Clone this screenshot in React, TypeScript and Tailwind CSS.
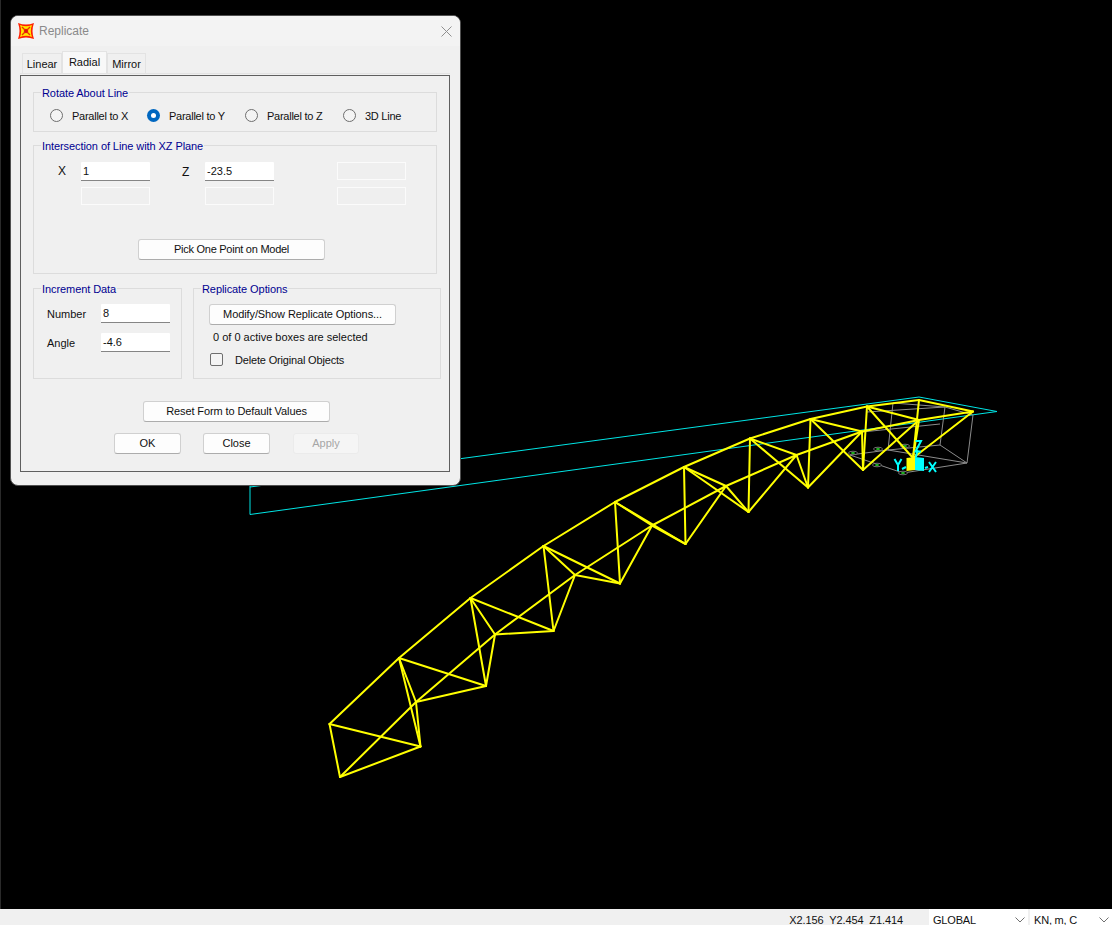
const F = "font-['Liberation_Sans',Arial,sans-serif]";

// top chord, middle chord and bottom nodes of the truss
const A = [[329.5, 724], [399, 658], [470.5, 598], [543.5, 546], [615, 502], [684, 467], [750, 438.5], [810.5, 419], [867, 406.5], [919, 400]];
const B = [[340, 777], [416, 702], [495, 634.5], [575, 575], [652, 525.5], [726, 486], [796.5, 455], [862, 431.5], [919, 420]];
const C = [[420.5, 746.5], [486, 686], [553.5, 631], [620, 583.5], [685.5, 544], [748.5, 512], [808, 487.5], [863, 470], [913, 458]];
const END = [973, 411.5];

function trussLines() {
  const out: number[][][] = [];
  for (let i = 0; i < 9; i++) {
    out.push([A[i], A[i + 1]], [A[i], C[i]], [B[i], C[i]], [A[i + 1], C[i]]);
    if (i < 8) out.push([B[i], B[i + 1]], [B[i + 1], C[i]], [A[i + 1], B[i + 1]]);
  }
  out.push([A[0], B[0]], [A[9], END], [B[8], END], [C[8], END]);
  return out;
}

const GREY_BOX = [
  [[893, 403], [945, 407]], [[945, 407], [973, 415]], [[893, 403], [888, 450]], [[945, 407], [940, 445]],
  [[973, 415], [967, 463]], [[888, 450], [967, 463]], [[850, 455], [888, 450]], [[888, 450], [940, 445]],
  [[940, 445], [967, 463]], [[850, 455], [903, 473]], [[903, 473], [967, 463]], [[867, 412], [945, 407]],
  [[862, 432], [940, 424]],
];

const ELLIPSES = [[853, 453], [878, 449], [877, 465], [903, 473], [905, 446]];

function Model() {
  return (
    <svg className="absolute inset-0" width="1112" height="909" viewBox="0 0 1112 909" fill="none">
      <polyline points="250,485 250,514.5 997,411.5 919,397 250,487" stroke="#00e5e5" strokeWidth="1" />
      {GREY_BOX.map((l, i) => (
        <line key={i} x1={l[0][0]} y1={l[0][1]} x2={l[1][0]} y2={l[1][1]} stroke="#8c8c8c" strokeWidth="1" />
      ))}
      {ELLIPSES.map(([x, y], i) => (
        <g key={i}>
          <ellipse cx={x} cy={y} rx="4.5" ry="1.8" stroke="#8c8c8c" strokeWidth="0.8" fill="#000" />
          <ellipse cx={x} cy={y} rx="2" ry="0.9" fill="#22c022" />
        </g>
      ))}
      {trussLines().map((l, i) => (
        <line key={i} x1={l[0][0]} y1={l[0][1]} x2={l[1][0]} y2={l[1][1]} stroke="#ffff00" strokeWidth="2" strokeLinecap="round" />
      ))}
      {/* global axes */}
      <path d="M906.5 458 L915 457 V470 L906.5 471 Z" fill="#ffff00" />
      <path d="M915 457 L924 458 V471 L915 470 Z" fill="#00ffff" />
      <path d="M916 457 L917.5 450 M915.5 441 H921 L915.5 451.5 H921" stroke="#00ffff" strokeWidth="2" />
      <path d="M894.5 459 L898 465 L901.5 459 M898 465 V471 M902 469 L906 467" stroke="#00ffff" strokeWidth="2" />
      <path d="M929 462 L936 472 M936 462 L929 472 M925 468 L928 467" stroke="#00ffff" strokeWidth="2" />
    </svg>
  );
}

function Logo() {
  return (
    <svg width="16" height="16" viewBox="0 0 16 16" className="shrink-0">
      <path d="M0 0 Q8 3 16 0 Q13 8 16 16 Q8 13 0 16 Q3 8 0 0 Z" fill="#ff2000" />
      <path d="M2 2 Q8 4.4 14 2 Q11.6 8 14 14 Q8 11.6 2 14 Q4.4 8 2 2 Z" fill="#ffe800" />
      <path d="M4 4 L12 12 M12 4 L4 12" stroke="#f03000" strokeWidth="1.4" />
      <path d="M8 5.5 L10.5 8 L8 10.5 L5.5 8 Z" fill="#e01010" />
    </svg>
  );
}

function Radio({ label, checked, className }: { label: string; checked?: boolean; className: string }) {
  return (
    <div className={`flex items-center ${className}`}>
      {checked ? (
        <span className="w-[13px] h-[13px] rounded-full bg-[#0067c0] flex items-center justify-center">
          <span className="w-[5px] h-[5px] rounded-full bg-white" />
        </span>
      ) : (
        <span className="w-[13px] h-[13px] rounded-full border border-[#6e6e6e] bg-[#f4f4f4]" />
      )}
      <span className="ml-[9px] text-[#101010] tracking-[-0.25px]">{label}</span>
    </div>
  );
}

function Field({ value, className = '' }: { value: string; className?: string }) {
  return (
    <div className={`w-[69px] h-[19px] bg-white border-b border-[#858585] rounded-t-[1px] pl-[2px] leading-[19px] text-[#101010] ${className}`}>
      {value}
    </div>
  );
}

function EmptyField({ className = '' }: { className?: string }) {
  return <div className={`w-[69px] h-[18px] bg-[#efefef] border border-[#fbfbfb] ${className}`} />;
}

function Btn({ label, className, disabled }: { label: string; className: string; disabled?: boolean }) {
  return (
    <div
      className={`h-[21px] rounded-[3px] border flex items-center justify-center ${
        disabled ? 'bg-[#f5f5f5] border-[#ebebeb] text-[#a6a6a6]' : 'bg-[#fdfdfd] border-[#d0d0d0] border-b-[#acacac] text-[#101010]'
      } ${className}`}
    >
      {label}
    </div>
  );
}

function Group({ title, className, children }: { title: string; className: string; children: React.ReactNode }) {
  return (
    <fieldset className={`border border-[#dcdcdc] ${className}`}>
      <legend className="relative top-px ml-[7px] px-px text-[#000090] leading-[13px] tracking-[-0.08px]">{title}</legend>
      {children}
    </fieldset>
  );
}

function Dialog() {
  return (
    <div className={`${F} absolute left-[10px] top-[15px] w-[451px] h-[471px] bg-[#f0f0f0] rounded-[8px] border border-[#505050] text-[11px] overflow-hidden`}>
      {/* title bar */}
      <div className="h-[30px] bg-[#f3f3f3] flex items-center pl-[7px] pr-[8px]">
        <Logo />
        <span className="ml-[5px] text-[12px] text-[#8a8a8a] flex-1">Replicate</span>
        <svg width="11" height="11" viewBox="0 0 11 11" stroke="#8f8f8f" strokeWidth="1">
          <path d="M0.5 0.5 L10.5 10.5 M10.5 0.5 L0.5 10.5" />
        </svg>
      </div>

      <div className="pl-[9px] pr-[10px]">
        {/* tabs */}
        <div className="flex items-end h-[28px] pl-[2px] pr-[2px] mt-[-0.5px] border-b border-[#e3e3e3] text-[#101010]">
          <div className="w-[40px] h-[20px] bg-[#f0f0f0] border border-b-0 border-[#e3e3e3] flex items-center justify-center pt-[2px]">Linear</div>
          <div className="w-[45px] h-[22px] bg-[#f8f8f8] border border-b-0 border-[#e3e3e3] flex items-center justify-center">Radial</div>
          <div className="w-[39px] h-[20px] bg-[#f0f0f0] border border-b-0 border-[#e3e3e3] flex items-center justify-center pt-[2px]">Mirror</div>
        </div>

        {/* tab page */}
        <div className="mt-[1px] h-[397px] border border-[#5f5f5f] pl-[12px] pt-[10px]">
          <Group title="Rotate About Line" className="w-[404px] h-[46px]">
            <div className="relative flex pt-[9px] pl-[16px]">
              <Radio label="Parallel to X" className="w-[97px]" />
              <Radio label="Parallel to Y" checked className="w-[98px]" />
              <Radio label="Parallel to Z" className="w-[98px]" />
              <Radio label="3D Line" className="w-[90px]" />
            </div>
          </Group>

          <Group title="Intersection of Line with XZ Plane" className="w-[404px] h-[135px] mt-[7px]">
            <div className="flex pl-[24px] pt-[10px]">
              <span className="w-[23px] text-[12px] leading-[19px] text-[#101010]">X</span>
              <div className="w-[69px]">
                <Field value="1" />
                <EmptyField className="mt-[6px]" />
              </div>
              <span className="w-[23px] ml-[32px] text-[12px] leading-[21px] text-[#101010]">Z</span>
              <div className="w-[69px]">
                <Field value="-23.5" />
                <EmptyField className="mt-[6px]" />
              </div>
              <div className="w-[69px] ml-[63px]">
                <EmptyField />
                <EmptyField className="mt-[7px]" />
              </div>
            </div>
            <Btn label="Pick One Point on Model" className="w-[187px] ml-[104px] mt-[34px] tracking-[-0.26px]" />
          </Group>

          <div className="flex mt-[8px]">
            <Group title="Increment Data" className="w-[149px] h-[97px]">
              <div className="pl-[13px] pt-[9px]">
                <div className="flex items-center"><span className="w-[54px] pt-[2px] text-[#101010]">Number</span><Field value="8" /></div>
                <div className="flex items-center mt-[10px]"><span className="w-[54px] pt-[2px] text-[#101010]">Angle</span><Field value="-4.6" /></div>
              </div>
            </Group>
            <Group title="Replicate Options" className="w-[248px] h-[97px] ml-[11px]">
              <div className="pl-[15px] pt-[9px] text-[#101010]">
                <Btn label="Modify/Show Replicate Options..." className="w-[187px] tracking-[-0.1px]" />
                <div className="ml-[4px] mt-[6px] leading-[13px]">0 of 0 active boxes are selected</div>
                <div className="flex items-center mt-[8px] ml-[1px]">
                  <span className="w-[13px] h-[13px] rounded-[2px] border border-[#6e6e6e] bg-[#f4f4f4]" />
                  <span className="ml-[12px] tracking-[-0.17px]">Delete Original Objects</span>
                </div>
              </div>
            </Group>
          </div>

          <Btn label="Reset Form to Default Values" className="w-[187px] ml-[110px] mt-[22px] tracking-[-0.1px]" />
          <div className="flex ml-[81px] mt-[11px]">
            <Btn label="OK" className="w-[67px]" />
            <Btn label="Close" className="w-[67px] ml-[22px]" />
            <Btn label="Apply" disabled className="w-[66px] ml-[23px]" />
          </div>
        </div>
      </div>
    </div>
  );
}

function Combo({ label, className }: { label: string; className: string }) {
  return (
    <div className={`h-full bg-white flex items-center justify-between pl-[4px] pr-[3px] ${className}`}>
      <span className="mt-[6px] tracking-[-0.2px]">{label}</span>
      <svg width="10" height="6" viewBox="0 0 10 6" fill="none" stroke="#707070" className="mt-[6px]">
        <path d="M0.5 0.5 L5 5 L9.5 0.5" />
      </svg>
    </div>
  );
}

export default function App() {
  return (
    <div className={`${F} w-[1112px] h-[925px] flex flex-col overflow-hidden bg-black`}>
      <div className="relative flex-1 shadow-[inset_1px_0_0_#2a2a2a]">
        <Model />
        <Dialog />
      </div>
      <div className="h-[16px] bg-[#f0f0f0] flex justify-end text-[11px] text-[#101010] overflow-hidden">
        <span className="mr-[26px] mt-[4px] leading-[14px] whitespace-pre tracking-[-0.1px]">X2.156  Y2.454  Z1.414</span>
        <Combo label="GLOBAL" className="w-[99px]" />
        <Combo label="KN, m, C" className="w-[82px] ml-[2px]" />
      </div>
    </div>
  );
}
